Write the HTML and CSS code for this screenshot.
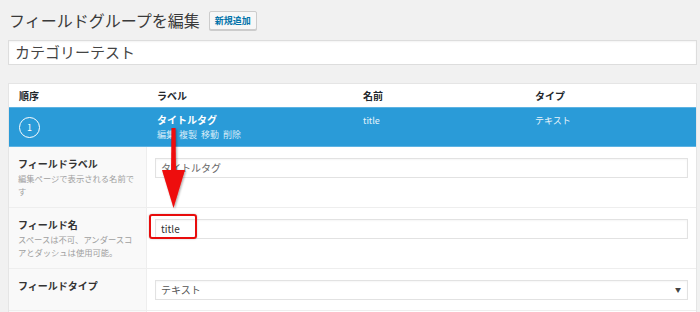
FILE: index.html
```html
<!DOCTYPE html>
<html lang="ja">
<head>
<meta charset="utf-8">
<link rel="stylesheet" href="styles.css">
</head>
<body>
<div class="wrap">
  <div class="page-head">
    <h1 class="page-title">フィールドグループを編集</h1>
    <span class="add-btn">新規追加</span>
  </div>
  <div class="title-input">カテゴリーテスト</div>

  <div class="panel">
    <div class="thead">
      <div class="c1">順序</div>
      <div class="c2">ラベル</div>
      <div class="c3">名前</div>
      <div class="c4">タイプ</div>
    </div>
    <div class="field-row">
      <div class="c1"><span class="order">1</span></div>
      <div class="c2">
        <div class="field-name">タイトルタグ</div>
        <div class="row-actions">編集&nbsp; 複製&nbsp; 移動&nbsp; 削除</div>
      </div>
      <div class="c3 field-meta">title</div>
      <div class="c4 field-meta">テキスト</div>
    </div>

    <div class="opt">
      <div class="opt-label">
        <div class="lbl">フィールドラベル</div>
        <div class="desc">編集ページで表示される名前です</div>
      </div>
      <div class="opt-input"><div class="inp light">タイトルタグ</div></div>
    </div>
    <div class="opt">
      <div class="opt-label">
        <div class="lbl">フィールド名</div>
        <div class="desc">スペースは不可、アンダースコアとダッシュは使用可能。</div>
      </div>
      <div class="opt-input"><div class="inp">title</div></div>
    </div>
    <div class="opt">
      <div class="opt-label">
        <div class="lbl">フィールドタイプ</div>
      </div>
      <div class="opt-input"><div class="inp select">テキスト<span class="caret">▼</span></div></div>
    </div>
    <div class="opt last">
      <div class="opt-label"></div>
      <div class="opt-input"></div>
    </div>
  </div>
</div>

<svg class="arrow" width="40" height="100" viewBox="0 0 40 100">
  <defs>
    <filter id="sh" x="-30%" y="-10%" width="160%" height="130%">
      <feDropShadow dx="1" dy="1" stdDeviation="0.8" flood-color="#000" flood-opacity="0.35"/>
    </filter>
  </defs>
  <g filter="url(#sh)" fill="#ee0a0a">
    <polygon points="17.5,2 21.5,2 22,46 17,46"/>
    <polygon points="8,44 31,44 19.5,82"/>
  </g>
</svg>
<div class="highlight"></div>
</body>
</html>
```

FILE: styles.css
```css
* { box-sizing: border-box; }
html, body { margin: 0; padding: 0; }
body {
  background: #f1f1f1;
  font-family: "Noto Sans CJK JP", "Noto Sans", sans-serif;
  color: #23282d;
  width: 700px;
  height: 312px;
  overflow: hidden;
  position: relative;
}
.wrap { padding: 10px 3px 0 8px; }

.page-head { display: flex; align-items: center; gap: 9px; height: 20px; }
.page-title {
  margin: 0 0 0 1px;
  font-size: 16px;
  font-weight: 400;
  line-height: 20px;
  color: #3a3a3a;
}
.add-btn {
  display: inline-flex;
  align-items: center;
  height: 19px;
  padding: 0 5px;
  font-size: 9px;
  font-weight: 700;
  color: #0073aa;
  background: #f7f7f7;
  border: 1px solid #ccc;
  border-radius: 2px;
  box-shadow: 0 1px 0 #ccc;
}

.title-input {
  margin-top: 10px;
  height: 25px;
  background: #fff;
  border: 1px solid #ddd;
  box-shadow: inset 0 1px 2px rgba(0,0,0,.05);
  padding: 0 6px;
  font-size: 15px;
  line-height: 22px;
  color: #444;
}

.panel {
  margin-top: 18px;
  background: #fff;
  border: 1px solid #e5e5e5;
  border-bottom: 0;
}
.thead, .field-row {
  display: grid;
  grid-template-columns: 138px 206px 172px 1fr;
}
.thead { height: 23px; align-items: center; font-size: 10px; font-weight: 700; color: #23282d; }
.thead .c1 { padding-left: 10px; }
.thead .c2, .thead .c3, .thead .c4 { padding-left: 10px; }

.field-row {
  height: 40px;
  background: #2a9bd8;
  border-top: 1px solid #5db3e3;
  border-bottom: 1px solid #5db3e3;
  color: #fff;
}
.field-row .c1 { display: flex; align-items: center; padding-left: 10px; }
.order {
  width: 21px; height: 21px;
  border: 1px solid #fff;
  border-radius: 50%;
  display: flex; align-items: center; justify-content: center;
  font-size: 9px;
  line-height: 1;
}
.field-row .c2, .field-row .c3, .field-row .c4 { padding: 5px 0 0 10px; }
.field-name { font-size: 10px; font-weight: 700; line-height: 14px; }
.row-actions { font-size: 9px; line-height: 13px; color: #d6ecf8; margin-top: 1px; }
.field-meta { font-size: 9px; line-height: 14px; color: #e8f4fb; padding-top: 6px !important; }

.opt {
  display: grid;
  grid-template-columns: 138px 1fr;
  border-bottom: 1px solid #eeeeee;
}
.opt-label {
  background: #f9f9f9;
  border-right: 1px solid #eeeeee;
  padding: 10px 12px 9px 9px;
}
.lbl { font-size: 10px; font-weight: 700; line-height: 14px; color: #333; }
.desc { font-size: 8.3px; line-height: 13px; color: #a0a0a0; margin-top: 1px; }
.opt-input { padding: 11px 8px 10px 8px; }
.inp {
  height: 20px;
  background: #fff;
  border: 1px solid #e2e2e2;
  box-shadow: inset 0 1px 2px rgba(0,0,0,.04);
  font-size: 10px;
  line-height: 18px;
  padding: 0 5px;
  color: #333;
}
.inp.light { color: #666; }
.inp.select { display: flex; justify-content: space-between; color: #555; }
.caret { font-size: 6px; color: #444; padding-right: 1px; }
.opt.last { border-bottom: 0; }
.opt.last .opt-label, .opt.last .opt-input { padding: 0; height: 1px; }

.arrow { position: absolute; left: 154px; top: 126px; }
.highlight {
  position: absolute;
  left: 149px; top: 214px;
  width: 48px; height: 25px;
  border: 2px solid #e80c0c;
  border-radius: 3px;
  box-shadow: 0 0 2px rgba(0,0,0,.25);
}
```
